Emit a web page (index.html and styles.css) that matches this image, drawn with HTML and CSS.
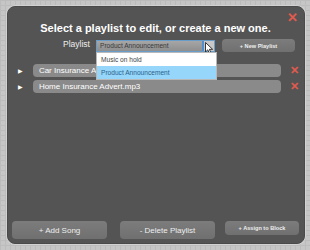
FILE: index.html
```html
<!DOCTYPE html>
<html lang="en">
<head>
  <meta charset="UTF-8">
  <title>Playlist Editor</title>
  <link rel="stylesheet" href="styles.css">
</head>
<body>
  <div class="panel">
    <span class="close">&#x2715;</span>
    <h2 class="title">Select a playlist to edit, or create a new one.</h2>
    <div class="pick-row">
      <label class="pick-label">Playlist</label>
      <div class="select">
        <span class="select-value">Product Announcement</span>
        <span class="select-arrow">
          <svg class="cursor" width="9" height="13" viewBox="0 0 9 13">
            <path d="M0.5 0.5 L0.5 10 L2.8 7.8 L4.5 11.8 L6 11.1 L4.4 7.3 L7.6 7.3 Z" fill="#fff" stroke="#222" stroke-width="0.9" stroke-linejoin="round"/>
          </svg>
        </span>
        <div class="select-menu">
          <div class="option">Music on hold</div>
          <div class="option active">Product Announcement</div>
        </div>
      </div>
      <button class="btn small">+ New Playlist</button>
    </div>
    <div class="songs">
      <div class="song">
        <span class="play">&#9654;</span>
        <div class="song-bar">Car Insurance Advert.mp3</div>
        <span class="remove">&#x2715;</span>
      </div>
      <div class="song">
        <span class="play">&#9654;</span>
        <div class="song-bar">Home Insurance Advert.mp3</div>
        <span class="remove">&#x2715;</span>
      </div>
    </div>
    <div class="actions">
      <button class="btn big">+ Add Song</button>
      <button class="btn big">- Delete Playlist</button>
      <button class="btn small assign">+ Assign to Block</button>
    </div>
  </div>
</body>
</html>
```

FILE: styles.css
```css
body {
  margin: 0;
  width: 310px;
  height: 250px;
  background-color: #c6c6c6;
  background-image:
    linear-gradient(#bcbcbc 1px, transparent 1px),
    linear-gradient(90deg, #bcbcbc 1px, transparent 1px);
  background-size: 5px 5px;
  font-family: "Liberation Sans", Arial, sans-serif;
  overflow: hidden;
}
.panel {
  position: relative;
  box-sizing: border-box;
  margin: 6px 5px 0 7px;
  height: 238px;
  background: #545454;
  border: 1px solid #4a4a4a;
  border-radius: 8px;
  box-shadow: 0 0 0 1px #d2d2d2;
  display: flex;
  flex-direction: column;
  padding: 15px 5px 4px 4px;
}
.close {
  position: absolute;
  top: 3px;
  right: 6px;
  color: #e05a4e;
  font-size: 13px;
  font-weight: bold;
}
.title {
  margin: 0;
  color: #fff;
  font-size: 11px;
  font-weight: bold;
  text-align: center;
  line-height: 13px;
}
.pick-row {
  display: flex;
  align-items: center;
  margin-top: 4px;
  padding-left: 51px;
}
.pick-label {
  color: #eee;
  font-size: 8.5px;
  width: 33px;
  margin-top: -3px;
}
.select {
  position: relative;
  display: flex;
  width: 119px;
  height: 12px;
  box-sizing: border-box;
  border: 1px solid #6a9cc8;
  background: linear-gradient(#a6a6a6, #8f8f8f);
}
.select-value {
  flex: 1;
  color: #3a3a3a;
  font-size: 6.6px;
  line-height: 10px;
  padding-left: 3px;
}
.select-arrow {
  position: relative;
  width: 10px;
  border-left: 2px solid #4f8fcf;
  background: #c8c8c8;
}
.cursor {
  position: absolute;
  left: 1px;
  top: 1px;
}
.select-menu {
  position: absolute;
  top: 11px;
  left: -1px;
  width: 119px;
  background: #fff;
  border: 1px solid #b8b8b8;
  z-index: 2;
}
.option {
  color: #444;
  font-size: 6.6px;
  height: 13px;
  line-height: 13px;
  padding-left: 4px;
}
.option.active {
  background: #96d6fa;
  color: #2c5f8a;
}
.btn {
  border: none;
  color: #eee;
  font-family: "Liberation Sans", Arial, sans-serif;
  background: linear-gradient(#7c7c7c, #707070);
  border-radius: 4px;
  padding: 0;
}
.btn.small {
  font-size: 5.6px;
  font-weight: bold;
  width: 73px;
  height: 13px;
  margin-left: 7px;
}
.songs {
  flex: 1;
  display: flex;
  flex-direction: column;
  gap: 3px;
  margin-top: 12px;
}
.song {
  display: flex;
  align-items: center;
  height: 13px;
}
.play {
  color: #fff;
  font-size: 6px;
  width: 21px;
  padding-left: 6px;
  box-sizing: border-box;
}
.song-bar {
  width: 250px;
  height: 13px;
  line-height: 13px;
  background: #8a8a8a;
  border-radius: 4px;
  color: #fff;
  font-size: 8px;
  padding-left: 6px;
  box-sizing: border-box;
}
.remove {
  color: #e05a4e;
  font-size: 11px;
  font-weight: bold;
  margin-left: 9px;
}
.actions {
  display: flex;
  align-items: flex-start;
}
.btn.big {
  width: 95px;
  height: 18px;
  font-size: 8px;
  margin-right: 13px;
}
.btn.big + .btn.big {
  margin-right: 10px;
}
.btn.assign {
  width: 74px;
  height: 14px;
  margin-left: 0;
}
```
